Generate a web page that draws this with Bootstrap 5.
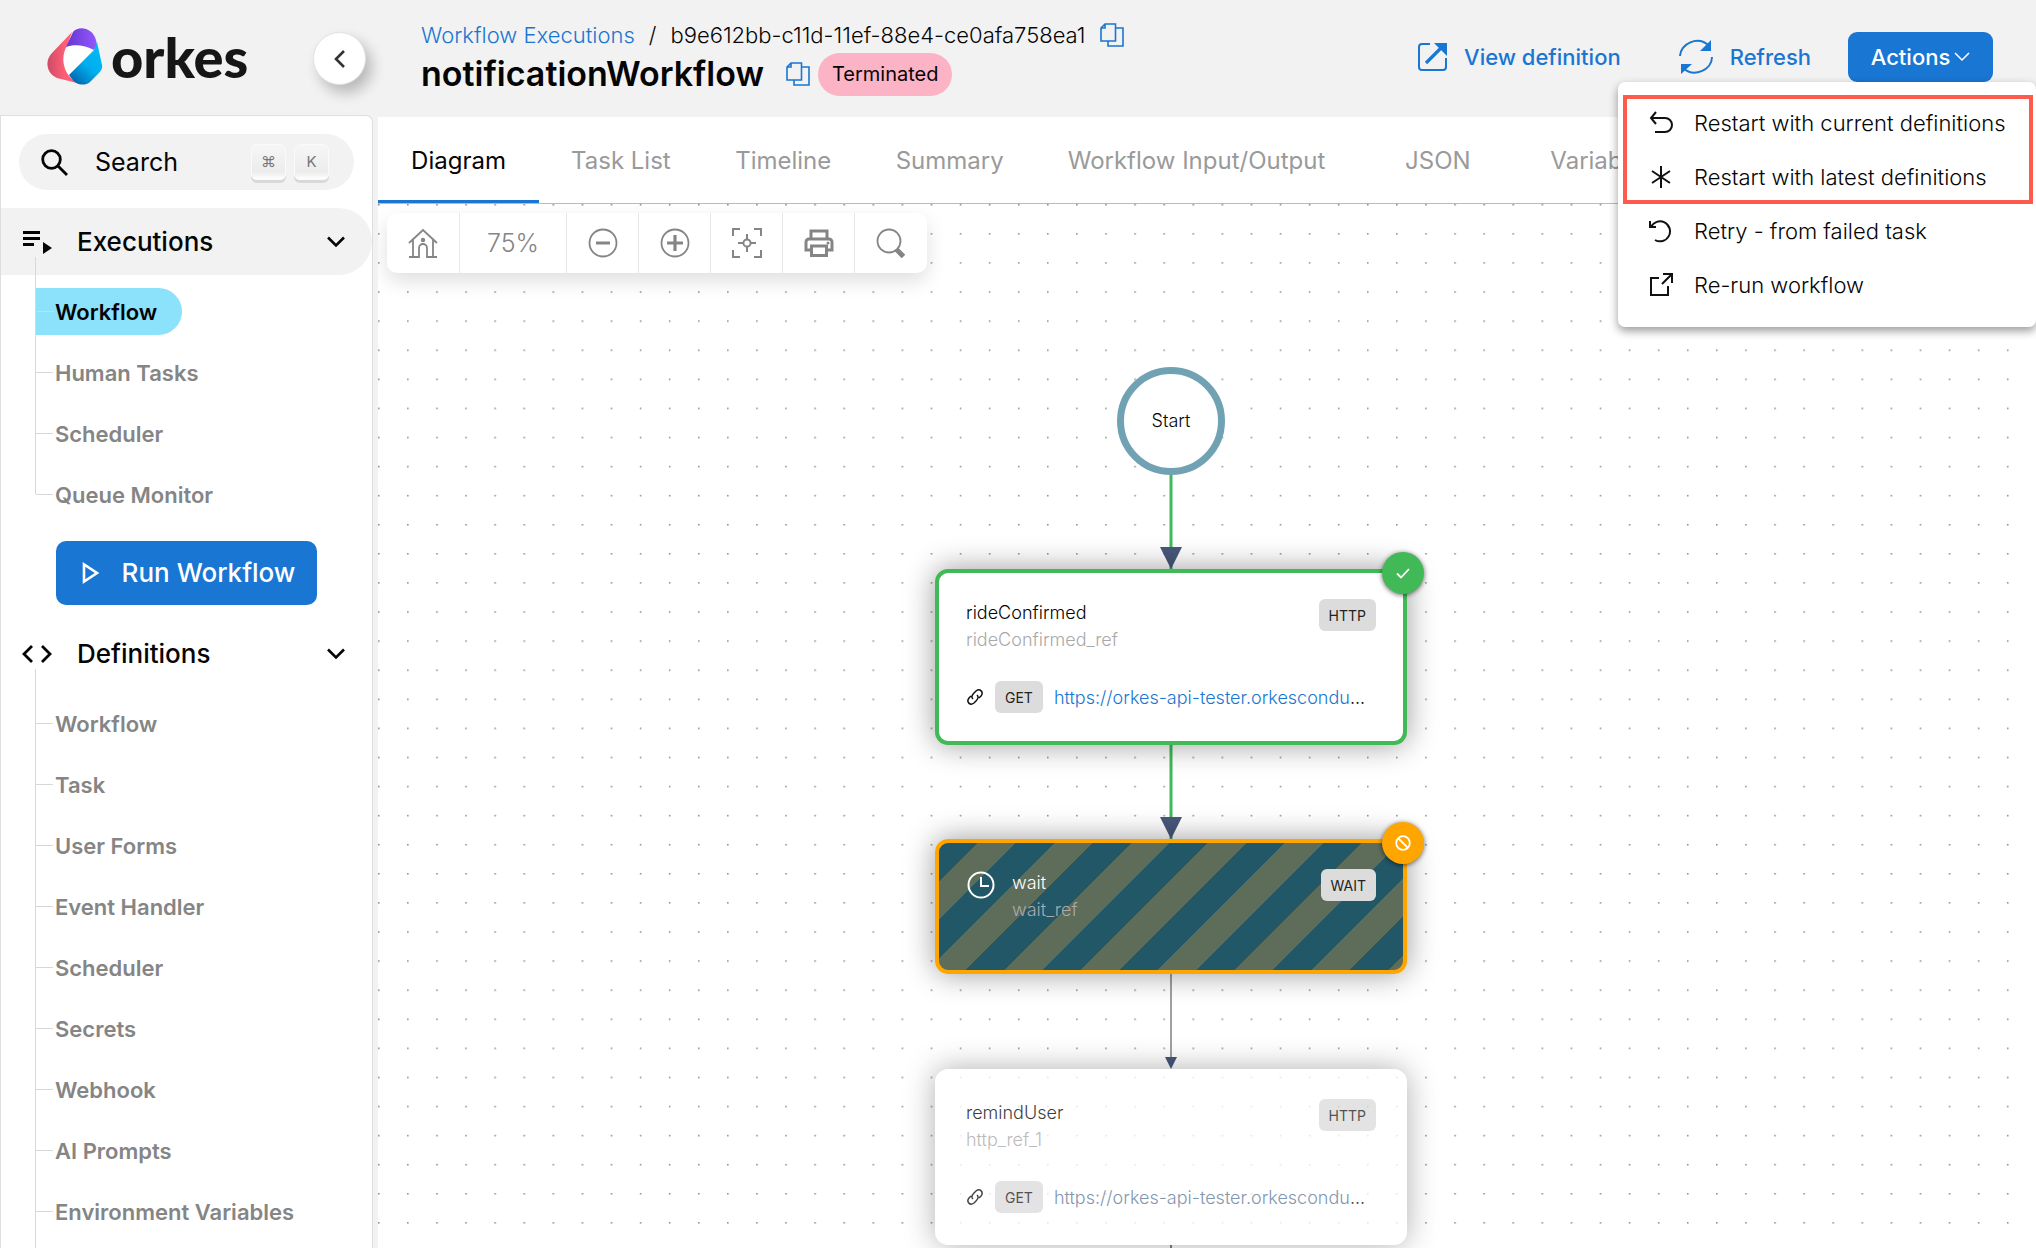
<!DOCTYPE html>
<html lang="en">
<head>
<meta charset="utf-8">
<meta name="viewport" content="width=device-width, initial-scale=1">
<title>notificationWorkflow</title>
<link href="https://cdn.jsdelivr.net/npm/bootstrap@5.3.0/dist/css/bootstrap.min.css" rel="stylesheet">
<script src="https://cdn.jsdelivr.net/npm/bootstrap@5.3.0/dist/js/bootstrap.bundle.min.js"></script>
<style>
:root { --blue: #1976d2; --soft: #f2f2f2; --mute: #858585; --green: #41b957; --orange: #ffa500; }
body { font-family: Inter, "Open Sans", sans-serif; font-size: 22px; line-height: 28px; color: #050505; background: var(--soft); }
a { color: var(--blue); text-decoration: none; }
svg { display: block; flex: none; }
.app-shell { height: 100vh; }
.app-body { min-height: 0; }
.top-bar { height: 117px; }
.brand-area { width: 378px; padding: 0 12px 0 47px; }
.brand-name { font-family: Lato, sans-serif; font-weight: 900; font-size: 56px; line-height: 60px; color: #161616; }
.fold-btn { width: 53px; height: 53px; background: #fff; border: 1px solid #e2e2e2; box-shadow: 6px 8px 14px rgba(0,0,0,.24); }
.title-area { padding: 4px 0 0 43px; }
.crumbs { --bs-breadcrumb-divider: none; font-size: 22px; font-weight: 300; gap: 14px; }
.title-row { margin-top: 3px; }
.flow-title { font-size: 34px; line-height: 44px; font-weight: 600; }
.state-pill { background: #fcb3c6; border-radius: 22px; height: 43px; padding: 0 14px; font-size: 20px; font-weight: 400; }
.icon-btn { color: var(--blue); font-weight: 500; border: 0; padding: 0; font-size: 22px; background: none; }
.copy-gap { margin-left: 22px; }
.refresh-gap { margin-left: 57px; }
.act-btn { background: var(--blue); color: #fff; height: 50px; width: 145px; border-radius: 9px; font-size: 22px; font-weight: 500; padding: 0; border: 0; }
.act-wrap { padding-right: 43px; margin-left: 37px; }
.act-menu { top: 50px; right: 0; width: 418px; padding: 13px 3px 15px 5px; border: 0; border-radius: 7px; box-shadow: 0 4px 10px rgba(0,0,0,.4); }
.act-menu .dropdown-item { height: 54px; padding: 0 0 0 26px; gap: 21px; font-size: 22px; color: #050505; font-weight: 300; }
.hot-box { border: 4px solid #ff5b4d; height: 109px; }
.act-menu .hot-box .dropdown-item { padding-left: 22px; height: 48px; }
.act-menu .hot-box .dropdown-item + .dropdown-item { height: 54px; padding-top: 6px; }
.side { width: 373px; margin-right: 5px; background: #fff; border: 1px solid #dedede; border-bottom: 0; border-top-right-radius: 7px; margin-top: -2px; }
.search-pill { height: 56px; margin: 18px; border-radius: 28px; background: var(--soft); padding: 0 25px 0 22px; }
.search-pill input { background: none; border: 0; font-size: 25px; min-width: 0; outline: 0; color: #050505; padding: 0; margin-left: 27px; }
.search-pill input::placeholder { color: #050505; opacity: 1; }
.key-cap { width: 35px; height: 36px; border-radius: 6px; background: linear-gradient(#f6f6f6, #ececec 80%, #fff); border: 1px solid #fafafa; box-shadow: 0 3px 0 #d9d9d9; color: #777; font-size: 15px; font-family: Inter, "DejaVu Sans", sans-serif; }
.side-head { height: 67px; width: 100%; border: 0; background: none; padding: 0 27px 0 21px; font-size: 26px; font-weight: 500; border-radius: 0 34px 34px 0; color: #050505; }
.side-head.open { background: var(--soft); }
.side-head .glyph { width: 55px; }
.tree { padding: 6px 0 1px 34px; position: relative; }
.tree::before { content: ""; position: absolute; left: 34px; top: -18px; bottom: 32px; width: 1px; background: #d8d8d8; }
.tree.endless::before { bottom: -40px; }
.tree li { height: 61px; display: flex; align-items: center; }
.tree a { height: 47px; padding: 0 25px 0 20px; display: flex; align-items: center; color: var(--mute); font-weight: 600; font-size: 22px; position: relative; }
.tree a::before { content: ""; position: absolute; left: 1px; width: 17px; height: 1px; background: #d8d8d8; top: 23px; }
.tree a.now { background: #8ce1fb; color: #050505; border-radius: 0 24px 24px 0; margin-left: 1px; padding-left: 19px; }
.run-btn { height: 64px; width: 261px; margin: 15px 0 15px 55px; background: var(--blue); color: #fff; border: 0; border-radius: 10px; font-size: 26px; font-weight: 500; gap: 22px; padding: 0 0 0 4px; }
.work-area { min-width: 0; }
.tab-strip { height: 87px; background: #fff; border-bottom: 1px solid #bbb; }
.tab-strip .nav-link { min-width: 161px; padding: 5px 32px 0; height: 86px; color: #9a9a9a; font-size: 24px; font-weight: 400; border: 0; border-bottom: 3px solid transparent; border-radius: 0; white-space: nowrap; }
.tab-strip .nav-link.active { color: #050505; border-color: var(--blue); background: none; }
.board { background: #fff; }
.tool-strip { margin: 9px; height: 60px; border-radius: 10px; background: #fff; box-shadow: 0 8px 20px rgba(0,0,0,.13); position: relative; color: var(--mute); overflow: hidden; }
.tool-strip button { width: 72px; border: 0; background: none; color: inherit; border-right: 1px solid #e8e8e8; padding: 0; }
.tool-strip button:first-child { width: 73px; }
.tool-strip button:last-child { border: 0; }
.tool-strip .pct { width: 107px; font-size: 25px; font-weight: 300; }
.graph { position: absolute; left: calc(50% - 272px); top: 163px; width: 472px; }
.start-node { width: 108px; height: 108px; border: 7px solid #71a2b3; background: #fff; font-size: 18px; font-weight: 300; }
.node { width: 100%; border-radius: 13px; box-shadow: 0 0 30px rgba(0,0,0,.4); position: relative; background: #fff; padding: 26px 27px 28px; border: 4px solid var(--green); font-size: 18px; line-height: 27px; font-weight: 300; }
.node.tall { height: 176px; }
.node.halt { height: 135px; border-color: var(--orange); color: #fff; background: repeating-linear-gradient(135deg, #225768 0, #225768 6.5%, #5e6c5a 6.5%, #5e6c5a 13%); }
.node.idle { border-color: #fff; opacity: .78; }
.sub { color: #a9a9a9; }
.tag { background: #dcdcdc; color: #222; border-radius: 6px; height: 32px; padding: 0 10px; font-size: 14px; font-weight: 400; display: flex; align-items: center; }
.url-row { gap: 11px; }
.idle .url a { color: #5f7a99; }
.dot-badge { position: absolute; right: -21px; top: -21px; width: 42px; height: 42px; border-radius: 50%; background: var(--green); box-shadow: 0 1px 5px rgba(0,0,0,.6); }
.halt .dot-badge { background: var(--orange); }
</style>
</head>
<body>
<div class="app-shell d-flex flex-column overflow-hidden">
<header class="top-bar d-flex flex-shrink-0">
  <div class="brand-area d-flex align-items-center flex-shrink-0">
    <a href="#" class="d-flex align-items-center pb-1" aria-label="orkes">
      <svg width="56" height="57" viewBox="0 0 56 57">
        <defs>
          <linearGradient id="lr" x1="0" y1="0" x2="1" y2="0"><stop stop-color="#cf4a66"/><stop offset=".6" stop-color="#ff6078"/></linearGradient>
          <linearGradient id="lb" x1=".9" y1="0" x2=".2" y2="1"><stop stop-color="#00bdf8"/><stop offset=".55" stop-color="#00adec"/><stop offset="1" stop-color="#0065ae"/></linearGradient>
          <linearGradient id="lp" x1="0" y1="0" x2="1" y2="0"><stop stop-color="#6536cf"/><stop offset="1" stop-color="#9458ff"/></linearGradient>
        </defs>
        <path d="M20 18C26 16 40 17 48 22L22 47C14 38 15 27 20 18Z" fill="#fff"/>
        <path d="M25 4L5 25C-3 33 0 46 10 50L30 55C14 45 14 27 20 18Z" fill="url(#lr)"/>
        <path d="M19 19L26 4C32-3 46 0 49 12L50 17L47 22C38 17 27 16 19 19Z" fill="url(#lp)"/>
        <path d="M50 14L55 37C56 41 53 44 51 46L43 54C37 59 28 56 25 51L22 47L47 22Z" fill="url(#lb)"/>
      </svg>
      <span class="brand-name ms-2">orkes</span>
    </a>
    <button class="fold-btn rounded-circle ms-auto d-flex align-items-center justify-content-center p-0" aria-label="Collapse menu">
      <svg width="12" height="18" viewBox="0 0 12 18" fill="none" stroke="#333" stroke-width="2.6"><path d="M10 1L2 9l8 8"/></svg>
    </button>
  </div>
  <div class="flex-grow-1 d-flex align-items-center pb-1">
    <div class="title-area flex-grow-1">
      <nav aria-label="breadcrumb">
        <ol class="crumbs breadcrumb mb-0 align-items-center flex-nowrap">
          <li class="text-nowrap"><a href="#">Workflow Executions</a></li>
          <li aria-hidden="true">/</li>
          <li class="text-nowrap">b9e612bb-c11d-11ef-88e4-ce0afa758ea1</li>
          <li class="d-flex"><button class="icon-btn" aria-label="Copy id"><svg width="24" height="24" viewBox="0 0 24 24" fill="none" stroke="currentColor" stroke-width="1.6"><path d="M5 1h10.5v17H1V5zM1 5h4V1M15.5 5H23v18H8v-5"/></svg></button></li>
        </ol>
      </nav>
      <div class="title-row d-flex align-items-center">
        <h1 class="flow-title mb-0">notificationWorkflow</h1>
        <button class="icon-btn copy-gap" aria-label="Copy name"><svg width="24" height="24" viewBox="0 0 24 24" fill="none" stroke="currentColor" stroke-width="1.6"><path d="M5 1h10.5v17H1V5zM1 5h4V1M15.5 5H23v18H8v-5"/></svg></button>
        <span class="state-pill d-flex align-items-center ms-2">Terminated</span>
      </div>
    </div>
    <button class="icon-btn d-flex align-items-center text-nowrap">
      <svg class="me-3" width="30" height="30" viewBox="0 0 30 30" fill="none" stroke="currentColor" stroke-width="2"><path d="M12 2H4a3 3 0 0 0-3 3v20a3 3 0 0 0 3 3h21a3 3 0 0 0 3-3v-9"/><path d="M8 21L23 6" stroke-width="3.2"/><path d="M16 1h13v13z" fill="currentColor" stroke="none"/></svg>View definition
    </button>
    <button class="icon-btn refresh-gap d-flex align-items-center">
      <svg class="me-3" width="36" height="36" viewBox="0 0 36 36" fill="none" stroke="currentColor" stroke-width="2"><path d="M2 17C2 5 20-4 31 7M34 18C34 31 16 39 5 29"/><path d="M33 1v11H22zM3 35V25h11z" fill="currentColor" stroke="none"/></svg>Refresh
    </button>
    <div class="dropdown act-wrap">
      <button class="act-btn d-flex align-items-center justify-content-center" aria-expanded="true">Actions<svg class="ms-1" width="16" height="10" viewBox="0 0 16 10" fill="none" stroke="currentColor" stroke-width="1.5"><path d="M1 1l7 7 7-7"/></svg></button>
      <div class="act-menu dropdown-menu show">
        <div class="hot-box">
          <a class="dropdown-item d-flex align-items-center" href="#"><svg width="24" height="24" viewBox="0 0 24 24" fill="none" stroke="#111" stroke-width="2"><path d="M7 1L2 7l5 6M2 7h14a7 7 0 0 1 0 14H6"/></svg>Restart with current definitions</a>
          <a class="dropdown-item d-flex align-items-center" href="#"><svg width="24" height="24" viewBox="0 0 24 24" fill="none" stroke="#111" stroke-width="2"><path d="M12 1v22M3 6l18 12M21 6L3 18"/></svg>Restart with latest definitions</a>
        </div>
        <a class="dropdown-item d-flex align-items-center" href="#"><svg width="24" height="24" viewBox="0 0 24 24" fill="none" stroke="#111" stroke-width="2"><path d="M1 2v6h6M2 8A10 10 0 1 1 6 21"/></svg>Retry - from failed task</a>
        <a class="dropdown-item d-flex align-items-center" href="#"><svg width="24" height="24" viewBox="0 0 24 24" fill="none" stroke="#111" stroke-width="2"><path d="M10 5H2v17h17v-9M14 1h9v9M23 1L13 11"/></svg>Re-run workflow</a>
      </div>
    </div>
  </div>
</header>
<div class="app-body d-flex flex-grow-1">
  <aside class="side flex-shrink-0 overflow-hidden d-flex flex-column">
    <label class="search-pill d-flex align-items-center flex-shrink-0">
      <svg width="27" height="27" viewBox="0 0 27 27" fill="none" stroke="#050505" stroke-width="2.8"><circle cx="10.5" cy="10.5" r="8.8"/><path d="M17 17l9 9"/></svg>
      <input class="flex-grow-1" type="search" placeholder="Search" aria-label="Search">
      <span class="key-cap d-flex align-items-center justify-content-center flex-shrink-0">⌘</span>
      <span class="key-cap d-flex align-items-center justify-content-center flex-shrink-0 ms-2">K</span>
    </label>
    <button class="side-head open d-flex align-items-center flex-shrink-0">
      <span class="glyph"><svg width="30" height="24" viewBox="0 0 30 24" fill="#050505"><path d="M1 1h17v3H1zM1 7h17v3H1zM1 13h11v3H1zM21 12l9 6-9 6z"/></svg></span>Executions
      <svg class="ms-auto" width="18" height="12" viewBox="0 0 18 12" fill="none" stroke="#050505" stroke-width="2.6"><path d="M1 1.500l8 8 8-8"/></svg>
    </button>
    <ul class="tree list-unstyled mb-0">
      <li><a class="now" href="#">Workflow</a></li>
      <li><a href="#">Human Tasks</a></li>
      <li><a href="#">Scheduler</a></li>
      <li><a href="#">Queue Monitor</a></li>
    </ul>
    <button class="run-btn d-flex align-items-center justify-content-center flex-shrink-0">
      <svg width="18" height="22" viewBox="0 0 18 22" fill="none" stroke="#fff" stroke-width="2.6"><path d="M2 2.500v17L15 11z"/></svg>Run Workflow
    </button>
    <button class="side-head d-flex align-items-center flex-shrink-0">
      <span class="glyph"><svg width="30" height="18" viewBox="0 0 30 18" fill="none" stroke="#050505" stroke-width="2.8"><path d="M10 1L2 9l8 8M20 1l8 8-8 8"/></svg></span>Definitions
      <svg class="ms-auto" width="18" height="12" viewBox="0 0 18 12" fill="none" stroke="#050505" stroke-width="2.6"><path d="M1 1.500l8 8 8-8"/></svg>
    </button>
    <ul class="tree endless list-unstyled mb-0 flex-shrink-0">
      <li><a href="#">Workflow</a></li>
      <li><a href="#">Task</a></li>
      <li><a href="#">User Forms</a></li>
      <li><a href="#">Event Handler</a></li>
      <li><a href="#">Scheduler</a></li>
      <li><a href="#">Secrets</a></li>
      <li><a href="#">Webhook</a></li>
      <li><a href="#">AI Prompts</a></li>
      <li><a href="#">Environment Variables</a></li>
    </ul>
  </aside>
  <main class="work-area flex-grow-1 d-flex flex-column">
    <nav class="tab-strip nav flex-nowrap overflow-hidden flex-shrink-0">
      <a class="nav-link active d-flex align-items-center justify-content-center" href="#">Diagram</a>
      <a class="nav-link d-flex align-items-center justify-content-center" href="#">Task List</a>
      <a class="nav-link d-flex align-items-center justify-content-center" href="#">Timeline</a>
      <a class="nav-link d-flex align-items-center justify-content-center" href="#">Summary</a>
      <a class="nav-link d-flex align-items-center justify-content-center" href="#">Workflow Input/Output</a>
      <a class="nav-link d-flex align-items-center justify-content-center" href="#">JSON</a>
      <a class="nav-link d-flex align-items-center justify-content-center" href="#">Variables</a>
    </nav>
    <section class="board flex-grow-1 position-relative overflow-hidden d-flex align-items-start">
      <svg class="position-absolute top-0 start-0 w-100 h-100">
        <defs><pattern id="grid" width="64" height="64" patternUnits="userSpaceOnUse" patternTransform="scale(.4545)"><rect width="3.4" height="3.4" fill="#8c8c8c"/></pattern></defs>
        <rect width="100%" height="100%" fill="url(#grid)"/>
      </svg>
      <div class="graph d-flex flex-column align-items-center">
        <div class="start-node rounded-circle d-flex align-items-center justify-content-center">Start</div>
        <svg width="24" height="94" viewBox="0 0 24 94"><path d="M12 0v94" stroke="#41b957" stroke-width="3"/><path d="M1 72h22L12 94z" fill="#48587c"/></svg>
        <div class="node tall d-flex flex-column justify-content-between">
          <div class="d-flex justify-content-between align-items-start">
            <div><div>rideConfirmed</div><div class="sub">rideConfirmed_ref</div></div>
            <span class="tag">HTTP</span>
          </div>
          <div class="url-row d-flex align-items-center">
            <svg width="18" height="18" viewBox="0 0 18 18" fill="none" stroke="#111" stroke-width="1.5"><path d="M7 11C5 9 6 7 8 5l2-2c4-3 8 1 5 5l-2 2M11 7c2 2 1 4-1 6l-2 2c-4 3-8-1-5-5l2-2"/></svg>
            <span class="tag">GET</span>
            <div class="url text-nowrap"><a href="#">https://orkes-api-tester.orkescondu</a>...</div>
          </div>
          <span class="dot-badge d-flex align-items-center justify-content-center"><svg width="14" height="11" viewBox="0 0 14 11" fill="none" stroke="#fff" stroke-width="1.8"><path d="M1 5.500l4 4L13 1"/></svg></span>
        </div>
        <svg width="24" height="94" viewBox="0 0 24 94"><path d="M12 0v94" stroke="#41b957" stroke-width="3"/><path d="M1 72h22L12 94z" fill="#48587c"/></svg>
        <div class="node halt">
          <div class="d-flex align-items-start">
            <svg width="30" height="30" viewBox="0 0 30 30" fill="none" stroke="#fff" stroke-width="2"><circle cx="15" cy="16" r="12.5"/><path d="M15 8v9h8"/></svg>
            <div class="ms-3"><div>wait</div><div class="sub">wait_ref</div></div>
            <span class="tag ms-auto">WAIT</span>
          </div>
          <span class="dot-badge d-flex align-items-center justify-content-center"><svg width="16" height="16" viewBox="0 0 16 16" fill="none" stroke="#fff" stroke-width="1.8"><circle cx="8" cy="8" r="6.8"/><path d="M3 3l10 10"/></svg></span>
        </div>
        <svg width="24" height="95" viewBox="0 0 24 95"><path d="M12 0v90" stroke="#808080" stroke-width="1.5"/><path d="M6 83h12l-6 12z" fill="#48587c"/></svg>
        <div class="node idle tall d-flex flex-column justify-content-between">
          <div class="d-flex justify-content-between align-items-start">
            <div><div>remindUser</div><div class="sub">http_ref_1</div></div>
            <span class="tag">HTTP</span>
          </div>
          <div class="url-row d-flex align-items-center">
            <svg width="18" height="18" viewBox="0 0 18 18" fill="none" stroke="#111" stroke-width="1.5"><path d="M7 11C5 9 6 7 8 5l2-2c4-3 8 1 5 5l-2 2M11 7c2 2 1 4-1 6l-2 2c-4 3-8-1-5-5l2-2"/></svg>
            <span class="tag">GET</span>
            <div class="url text-nowrap"><a href="#">https://orkes-api-tester.orkescondu</a>...</div>
          </div>
        </div>
        <svg width="24" height="94" viewBox="0 0 24 94"><path d="M12 0v94" stroke="#808080" stroke-width="2"/></svg>
      </div>
      <div class="tool-strip d-flex">
        <button aria-label="Home" class="d-flex align-items-center justify-content-center"><svg width="30" height="30" viewBox="0 0 30 30" fill="none" stroke="currentColor" stroke-width="1.8"><path d="M1 15L15 2l14 13M5 12v17M25 12v17M1 29h10V20a4 4 0 0 1 8 0v9h10"/><circle cx="15" cy="12" r="2.2" fill="currentColor" stroke="none"/></svg></button>
        <button class="pct">75%</button>
        <button aria-label="Zoom out" class="d-flex align-items-center justify-content-center"><svg width="30" height="30" viewBox="0 0 30 30" fill="none" stroke="currentColor" stroke-width="1.8"><circle cx="15" cy="15" r="13.5"/><path d="M8 15h14" stroke-width="3"/></svg></button>
        <button aria-label="Zoom in" class="d-flex align-items-center justify-content-center"><svg width="30" height="30" viewBox="0 0 30 30" fill="none" stroke="currentColor" stroke-width="1.8"><circle cx="15" cy="15" r="13.5"/><path d="M7 15h16M15 7v16" stroke-width="3.2"/></svg></button>
        <button aria-label="Fit to screen" class="d-flex align-items-center justify-content-center"><svg width="30" height="30" viewBox="0 0 30 30" fill="none" stroke="currentColor" stroke-width="2"><path d="M1 8V1h7M22 1h7v7M29 22v7h-7M8 29H1v-7M15 6v5M15 19v5M6 15h5M19 15h5"/><circle cx="15" cy="15" r="3.6"/></svg></button>
        <button aria-label="Print" class="d-flex align-items-center justify-content-center"><svg width="30" height="28" viewBox="0 0 30 28" fill="none" stroke="currentColor" stroke-width="3"><path d="M7 10V2h16v8M7 21H2v-8a3 3 0 0 1 3-3h20a3 3 0 0 1 3 3v8h-5"/><path d="M7.500 17h15v9.500h-15z"/><circle cx="24" cy="14" r="1.5" fill="currentColor" stroke="none"/></svg></button>
        <button aria-label="Search diagram" class="d-flex align-items-center justify-content-center"><svg width="30" height="30" viewBox="0 0 30 30" fill="none" stroke="currentColor" stroke-width="1.8"><circle cx="13" cy="13" r="11.5"/><path d="M20.500 21.500l7 7" stroke-width="5"/></svg></button>
      </div>
    </section>
  </main>
</div>
</div>
</body>
</html>
